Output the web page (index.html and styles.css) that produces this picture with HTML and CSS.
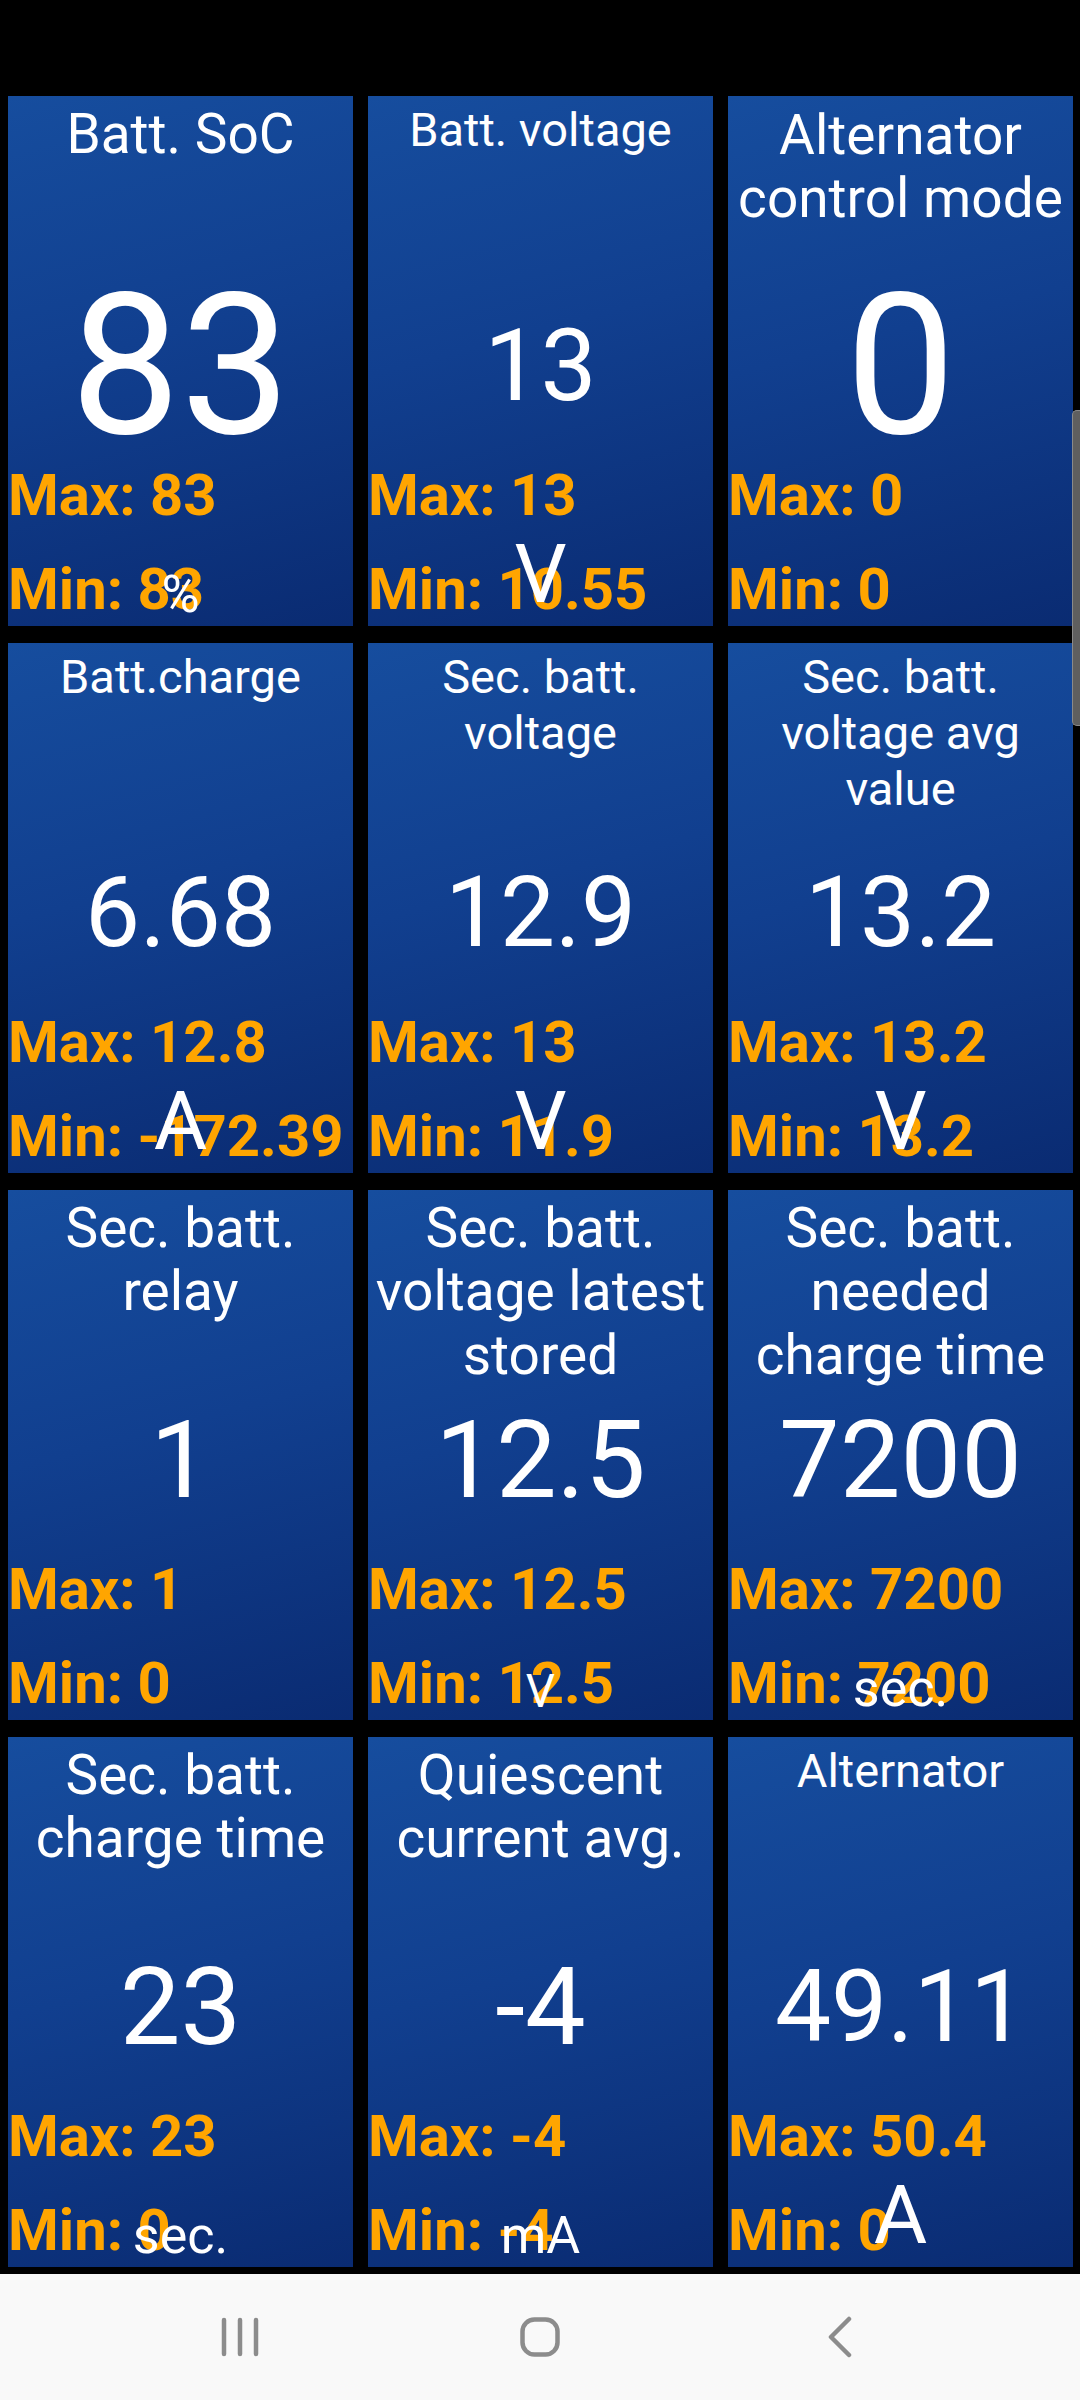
FILE: index.html
```html
<!DOCTYPE html>
<html lang="en">
<head>
    <meta charset="UTF-8">
    <title>Dashboard</title>
    <link rel="stylesheet" href="styles.css">
</head>
<body>
<div class="screen">
    <div class="status-bar"></div>

    <div class="grid">
        <div class="tile">
            <div class="title t-xl">Batt. SoC</div>
            <div class="value v196">83</div>
            <div class="stats"><div class="stat">Max: 83</div><div class="stat">Min: 83</div></div>
            <div class="unit unit-s">%</div>
        </div>
        <div class="tile">
            <div class="title t-m">Batt. voltage</div>
            <div class="value v100">13</div>
            <div class="stats"><div class="stat">Max: 13</div><div class="stat">Min: 10.55</div></div>
            <div class="unit unit-l">V</div>
        </div>
        <div class="tile">
            <div class="title t-l">Alternator control mode</div>
            <div class="value v196">0</div>
            <div class="stats"><div class="stat">Max: 0</div><div class="stat">Min: 0</div></div>
        </div>

        <div class="tile">
            <div class="title t-m">Batt.charge</div>
            <div class="value v98">6.68</div>
            <div class="stats"><div class="stat">Max: 12.8</div><div class="stat">Min: -172.39</div></div>
            <div class="unit unit-l">A</div>
        </div>
        <div class="tile">
            <div class="title t-m">Sec. batt. voltage</div>
            <div class="value v98">12.9</div>
            <div class="stats"><div class="stat">Max: 13</div><div class="stat">Min: 11.9</div></div>
            <div class="unit unit-l">V</div>
        </div>
        <div class="tile">
            <div class="title t-m">Sec. batt. voltage avg value</div>
            <div class="value v98">13.2</div>
            <div class="stats"><div class="stat">Max: 13.2</div><div class="stat">Min: 13.2</div></div>
            <div class="unit unit-l">V</div>
        </div>

        <div class="tile">
            <div class="title t-xl">Sec. batt. relay</div>
            <div class="value v108">1</div>
            <div class="stats"><div class="stat">Max: 1</div><div class="stat">Min: 0</div></div>
        </div>
        <div class="tile">
            <div class="title t-xl">Sec. batt. voltage latest stored</div>
            <div class="value v108">12.5</div>
            <div class="stats"><div class="stat">Max: 12.5</div><div class="stat">Min: 12.5</div></div>
            <div class="unit unit-xs">V</div>
        </div>
        <div class="tile">
            <div class="title t-xl">Sec. batt. needed charge time</div>
            <div class="value v108">7200</div>
            <div class="stats"><div class="stat">Max: 7200</div><div class="stat">Min: 7200</div></div>
            <div class="unit unit-s">sec.</div>
        </div>

        <div class="tile">
            <div class="title t-xl">Sec. batt. charge time</div>
            <div class="value v108">23</div>
            <div class="stats"><div class="stat">Max: 23</div><div class="stat">Min: 0</div></div>
            <div class="unit unit-s">sec.</div>
        </div>
        <div class="tile">
            <div class="title t-xl">Quiescent current avg.</div>
            <div class="value v108">-4</div>
            <div class="stats"><div class="stat">Max: -4</div><div class="stat">Min: -4</div></div>
            <div class="unit unit-s">mA</div>
        </div>
        <div class="tile">
            <div class="title t-m">Alternator</div>
            <div class="value v100">49.11</div>
            <div class="stats"><div class="stat">Max: 50.4</div><div class="stat">Min: 0</div></div>
            <div class="unit unit-l">A</div>
        </div>
    </div>

    <div class="scroll-thumb"></div>

    <div class="nav-bar">
        <div class="nav-btn">
            <svg width="40" height="40" viewBox="0 0 40 40">
                <path d="M4 3v34M20 3v34M36 3v34" stroke="#8c8c8c" stroke-width="4.5" stroke-linecap="round" fill="none"/>
            </svg>
        </div>
        <div class="nav-btn">
            <svg width="40" height="40" viewBox="0 0 40 40">
                <rect x="2.5" y="2.5" width="35" height="35" rx="12" stroke="#8c8c8c" stroke-width="4.5" fill="none"/>
            </svg>
        </div>
        <div class="nav-btn">
            <svg width="26" height="42" viewBox="0 0 26 42">
                <path d="M22 3L4 21L22 39" stroke="#8c8c8c" stroke-width="4.5" stroke-linecap="round" stroke-linejoin="round" fill="none"/>
            </svg>
        </div>
    </div>
</div>
</body>
</html>
```

FILE: styles.css
```css
html,body{
    margin: 0;
    padding: 0;
    background: #000;
}
.screen{
    position: relative;
    width: 1080px;
    height: 2400px;
    overflow: hidden;
    background: #000;
    font-family: Roboto, "Liberation Sans", sans-serif;
}
.status-bar{
    height: 88px;
}
.grid{
    display: grid;
    grid-template-columns: repeat(3, 345px);
    grid-template-rows: repeat(4, 530px);
    column-gap: 15px;
    row-gap: 17px;
    padding: 8px 7px 0 8px;
}
.tile{
    display: grid;
    grid-template-columns: 100%;
    grid-template-rows: 100%;
    overflow: hidden;
    background: linear-gradient(165deg, #164d9e 0%, #113f8f 45%, #0a2b72 100%);
    color: #fff;
}
.tile > div{
    grid-area: 1 / 1;
}
.title{
    align-self: start;
    padding-top: 7px;
    text-align: center;
    line-height: 1.15;
}
.t-xl{ font-size: 55px; }
.t-l{ font-size: 55px; padding-top: 8px; }
.t-m{ font-size: 47px; padding-top: 6px; line-height: 1.19; }

.value{
    align-self: center;
    justify-self: center;
    margin-top: 10px;
    line-height: 1;
    white-space: nowrap;
}
.v196{ font-size: 196px; }
.v108{ font-size: 108px; }
.v100{ font-size: 100px; }
.v98{ font-size: 98px; }

.stats{
    align-self: end;
    padding-bottom: 3px;
    color: #ffa500;
    font-weight: 700;
    font-size: 58px;
    line-height: 68px;
    white-space: nowrap;
}
.stat + .stat{
    margin-top: 26px;
}

.unit{
    align-self: end;
    justify-self: center;
    line-height: normal;
    white-space: nowrap;
}
.unit-l{ font-size: 82px; margin-bottom: 4px; }
.unit-s{ font-size: 52px; margin-bottom: 1px; }
.unit-xs{ font-size: 46px; margin-bottom: 2px; }

.scroll-thumb{
    position: absolute;
    right: 0;
    top: 410px;
    width: 7px;
    height: 314px;
    background: #5f5f5f;
    border: 1px solid #8a8a8a;
    border-right: none;
    border-radius: 5px 0 0 5px;
}

.nav-bar{
    position: absolute;
    left: 0;
    bottom: 0;
    width: 100%;
    height: 126px;
    background: #f9f9f9;
    display: flex;
    justify-content: center;
    align-items: center;
    gap: 240px;
}
.nav-btn{
    width: 60px;
    height: 60px;
    display: flex;
    justify-content: center;
    align-items: center;
}
```
